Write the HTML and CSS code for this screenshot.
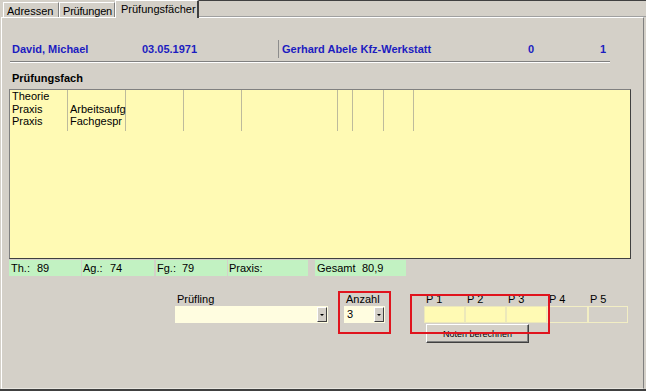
FILE: index.html
```html
<!DOCTYPE html>
<html lang="de">
<head>
  <meta charset="UTF-8" />
  <title>Prüfungsfächer</title>
  <link rel="stylesheet" href="styles.css">
</head>
<body>
  <div class="window">
    <div class="tabs">
      <div class="tab tab-first">Adressen</div>
      <div class="tab tab-second">Prüfungen</div>
      <div class="tab tab-active">Prüfungsfächer</div>
      <div class="tab-fill"></div>
    </div>

    <div class="panel">
      <div class="header">
        <span class="h-name">David, Michael</span>
        <span class="h-date">03.05.1971</span>
        <span class="h-firm">Gerhard Abele Kfz-Werkstatt</span>
        <span class="h-zero">0</span>
        <span class="h-one">1</span>
      </div>
      <div class="rule"></div>

      <div class="section-title">Prüfungsfach</div>

      <!-- Liste der Fächer -->
      <div class="listbox">
        <div class="col w58"><div>Theorie</div><div>Praxis</div><div>Praxis</div></div>
        <div class="col w58"><div>&nbsp;</div><div>Arbeitsaufg</div><div>Fachgespr</div></div>
        <div class="col w58"><div>&nbsp;</div><div>&nbsp;</div><div>&nbsp;</div></div>
        <div class="col w58"><div>&nbsp;</div><div>&nbsp;</div><div>&nbsp;</div></div>
        <div class="col w96"><div>&nbsp;</div><div>&nbsp;</div><div>&nbsp;</div></div>
        <div class="col w15"><div>&nbsp;</div><div>&nbsp;</div><div>&nbsp;</div></div>
        <div class="col w31"><div>&nbsp;</div><div>&nbsp;</div><div>&nbsp;</div></div>
        <div class="col w30"><div>&nbsp;</div><div>&nbsp;</div><div>&nbsp;</div></div>
      </div>

      <div class="summary">
        <div class="sbox s-th"><span class="slabel">Th.:</span>89</div>
        <div class="sbox s-ag"><span class="slabel">Ag.:</span>74</div>
        <div class="sbox s-fg"><span class="slabel">Fg.:</span>79</div>
        <div class="sbox s-px"><span class="slabel">Praxis:</span></div>
        <div class="sbox s-ges"><span class="slabel">Gesamt</span>80,9</div>
      </div>

      <div class="controls">
        <div class="field f-pruefling">
          <div class="field-label">Prüfling</div>
          <div class="combo"><span></span><span class="drop"><i></i></span></div>
        </div>
        <div class="field f-anzahl">
          <div class="field-label">Anzahl</div>
          <div class="combo"><span>3</span><span class="drop"><i></i></span></div>
        </div>
        <div class="field f-noten">
          <div class="pgrid">
            <div class="pcol"><div class="field-label">P 1</div><div class="pbox filled"></div></div>
            <div class="pcol"><div class="field-label">P 2</div><div class="pbox filled"></div></div>
            <div class="pcol"><div class="field-label">P 3</div><div class="pbox filled"></div></div>
            <div class="pcol"><div class="field-label">P 4</div><div class="pbox"></div></div>
            <div class="pcol last"><div class="field-label">P 5</div><div class="pbox"></div></div>
          </div>
          <button class="calc">Noten berechnen</button>
        </div>

        <!-- Markierungen -->
        <div class="mark mark-anzahl"></div>
        <div class="mark mark-noten"></div>
      </div>
    </div>
  </div>
</body>
</html>
```

FILE: styles.css
```css
body {
  margin: 0;
  background-color: #D4D0C8;
  font-family: "Liberation Sans", Arial, sans-serif;
  font-size: 11px;
  color: #000;
}

.window {
  width: 646px;
  height: 391px;
  box-sizing: border-box;
  border-bottom: 2px solid #404040;
  overflow: hidden;
}

/* Reiter */
.tabs {
  display: flex;
  height: 17px;
}

.tab {
  box-sizing: border-box;
  margin-top: 2px;
  height: 15px;
  padding: 1px 0 0 3px;
  line-height: 14px;
  border-top: 1px solid #fff;
  border-left: 1px solid #fff;
  border-right: 1px solid #808080;
  white-space: nowrap;
}

.tab-first {
  margin-left: 3px;
  width: 56px;
}

.tab-second {
  width: 56px;
  letter-spacing: -0.2px;
}

.tab-active {
  position: relative;
  z-index: 1;
  margin-top: 0;
  height: 18px;
  width: 84px;
  padding-left: 5px;
  background-color: #D4D0C8;
  border-right: 2px solid #404040;
}

.tab-fill {
  flex: 1;
  height: 17px;
  box-sizing: border-box;
  border-top: 1px solid #404040;
  border-bottom: 1px solid #A0A0A0;
}

/* Seite */
.panel {
  margin-left: 1px;
  width: 643px;
  height: 372px;
  box-sizing: border-box;
  border-top: 1px solid #fff;
  border-left: 1px solid #fff;
  border-right: 1px solid #808080;
  border-bottom: 1px solid #E8E6E0;
}

.header {
  display: flex;
  margin: 22px 0 0 10px;
  height: 18px;
  line-height: 18px;
  font-weight: bold;
  color: #1C1CC0;
  white-space: nowrap;
}

.h-name { width: 130px; }
.h-date { width: 136px; }

.h-firm {
  width: 246px;
  padding-left: 3px;
  border-left: 1px solid #8C8C8C;
}

.h-zero { width: 72px; }

.rule {
  margin: 3px 0 0 8px;
  width: 600px;
  height: 1px;
  background-color: #808080;
  border-bottom: 1px solid #fff;
}

.section-title {
  margin: 9px 0 0 10px;
  line-height: 13px;
  font-weight: bold;
}

.listbox {
  display: flex;
  align-items: flex-start;
  margin: 4px 0 0 7px;
  width: 622px;
  height: 170px;
  box-sizing: border-box;
  background-color: #FFFAB4;
  border-top: 1px solid #808080;
  border-left: 1px solid #808080;
  border-right: 1px solid #404040;
  border-bottom: 1px solid #404040;
}

.col {
  box-sizing: border-box;
  padding: 0 0 3px 2px;
  border-right: 1px solid #BDBA9C;
  white-space: nowrap;
  line-height: 12.5px;
}

.w58 { width: 58px; }
.w96 { width: 96px; }
.w15 { width: 15px; }
.w31 { width: 31px; }
.w30 { width: 30px; }

/* Summen */
.summary {
  display: flex;
  margin: 1px 0 0 7px;
  height: 16px;
  line-height: 16px;
}

.sbox {
  box-sizing: border-box;
  background-color: #C2F2C2;
  white-space: nowrap;
}

.slabel {
  display: inline-block;
}

.s-th { width: 72px; padding-left: 2px; }
.s-th .slabel { width: 26px; }
.s-ag { width: 72px; margin-left: 1px; padding-left: 1px; }
.s-ag .slabel { width: 27px; }
.s-fg { width: 71px; margin-left: 2px; padding-left: 1px; }
.s-fg .slabel { width: 25px; }
.s-px { width: 80px; margin-left: 1px; padding-left: 1px; }
.s-ges { width: 91px; margin-left: 7px; padding-left: 2px; }
.s-ges .slabel { width: 45px; }

/* Eingaben unten */
.controls {
  position: relative;
  display: flex;
  align-items: flex-start;
  margin-top: 16px;
}

.field {
  display: flex;
  flex-direction: column;
}

.field-label {
  line-height: 14px;
  padding-left: 2px;
  white-space: nowrap;
}

.f-pruefling {
  margin-left: 173px;
  width: 153px;
}

.f-anzahl {
  margin-left: 16px;
  width: 41px;
}

.combo {
  display: flex;
  justify-content: space-between;
  align-items: center;
  height: 17px;
  padding: 1px 1px 1px 3px;
  box-sizing: border-box;
  background-color: #FFFDE0;
  line-height: 15px;
}

.drop {
  display: flex;
  justify-content: center;
  align-items: center;
  width: 10px;
  height: 15px;
  box-sizing: border-box;
  background-color: #D4D0C8;
  border-top: 1px solid #fff;
  border-left: 1px solid #fff;
  border-right: 1px solid #404040;
  border-bottom: 1px solid #404040;
}

.drop i {
  width: 0;
  height: 0;
  border-left: 2px solid transparent;
  border-right: 2px solid transparent;
  border-top: 2px solid #000;
}

.f-noten {
  margin-left: 39px;
}

.pgrid {
  display: flex;
}

.pcol {
  width: 41px;
}

.pcol.last {
  width: 40px;
}

.pbox {
  height: 17px;
  box-sizing: border-box;
  border: 1px solid #F2EEC4;
}

.pbox.filled {
  background-color: #FFFAB4;
  border-color: #ECE8BA;
}

.calc {
  margin: 1px 0 0 2px;
  width: 103px;
  height: 19px;
  padding: 0;
  font-family: "Liberation Sans", Arial, sans-serif;
  font-size: 9px;
  color: #000;
  background-color: #D4D0C8;
  border-top: 1px solid #fff;
  border-left: 1px solid #fff;
  border-right: 1px solid #404040;
  border-bottom: 1px solid #404040;
  box-shadow: inset -1px -1px #808080;
}

.mark {
  position: absolute;
  box-sizing: border-box;
  border: 2px solid #E0141E;
}

.mark-anzahl {
  left: 336px;
  top: -1px;
  width: 53px;
  height: 43px;
}

.mark-noten {
  left: 408px;
  top: 2px;
  width: 140px;
  height: 40px;
}
```
